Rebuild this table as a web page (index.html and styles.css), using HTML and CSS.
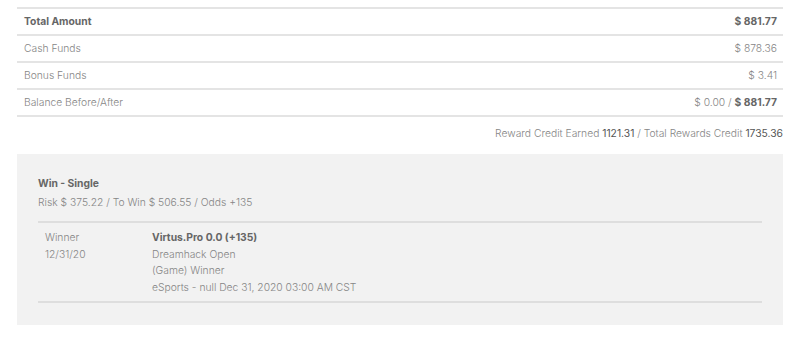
FILE: index.html
```html
<!DOCTYPE html>
<html lang="en">
  <head>
    <meta charset="UTF-8" />
    <meta name="viewport" content="width=device-width, initial-scale=1.0" />
    <title>Wager Receipt</title>
    <link rel="stylesheet" href="styles.css">
  </head>
  <body>
    <div class="receipt">
      <table class="totals">
        <tr class="total">
          <td>Total Amount</td>
          <td class="amount"><strong>$ 881.77</strong></td>
        </tr>
        <tr>
          <td>Cash Funds</td>
          <td class="amount">$ 878.36</td>
        </tr>
        <tr>
          <td>Bonus Funds</td>
          <td class="amount">$ 3.41</td>
        </tr>
        <tr>
          <td>Balance Before/After</td>
          <td class="amount">$ 0.00 / <strong>$ 881.77</strong></td>
        </tr>
      </table>

      <p class="rewards">
        Reward Credit Earned <b>1121.31</b> / Total Rewards Credit <b>1735.36</b>
      </p>

      <div class="wager">
        <div class="wagerHead">
          <h3>Win - Single</h3>
          <p>Risk $ 375.22 / To Win $ 506.55 / Odds +135</p>
        </div>
        <div class="pick">
          <div class="pickType">
            <div>Winner</div>
            <div>12/31/20</div>
          </div>
          <div class="pickInfo">
            <div class="pickName">Virtus.Pro 0.0 (+135)</div>
            <div>Dreamhack Open</div>
            <div>(Game) Winner</div>
            <div>eSports - null Dec 31, 2020 03:00 AM CST</div>
          </div>
        </div>
      </div>
    </div>
  </body>
</html>
```

FILE: styles.css
```css
body {
  margin: 0;
  font-family: Inter, "Open Sans", sans-serif;
  font-size: 10.3px;
  font-weight: 300;
  color: #858585;
  background-color: #fff;
}

.receipt {
  padding: 7px 21px 0 17px;
}

.totals {
  width: 100%;
  border-collapse: collapse;
  border-top: 2px solid #e4e4e4;
}

.totals td {
  padding: 0 6px 0 7px;
  line-height: 25px;
  border-bottom: 2px solid #e4e4e4;
}

.totals .amount {
  text-align: right;
}

.totals strong,
.total td {
  font-weight: 700;
  color: #666;
}

.rewards {
  margin: 0;
  padding: 10px 0 0;
  height: 27px;
  text-align: right;
}

.rewards b {
  font-weight: 400;
  color: #555;
}

.wager {
  background-color: #f2f2f2;
  padding: 20px 21px 22px;
}

.wagerHead {
  padding-bottom: 9px;
  border-bottom: 2px solid #dedede;
}

.wagerHead h3 {
  margin: 0;
  font-size: 10.3px;
  font-weight: 700;
  color: #666;
  line-height: 19px;
}

.wagerHead p {
  margin: 0;
  line-height: 19px;
}

.pick {
  display: flex;
  padding: 6px 0 5px 7px;
  border-bottom: 2px solid #dedede;
  line-height: 16.7px;
}

.pickType {
  width: 107px;
}

.pickName {
  font-weight: 700;
  color: #666;
}
```
